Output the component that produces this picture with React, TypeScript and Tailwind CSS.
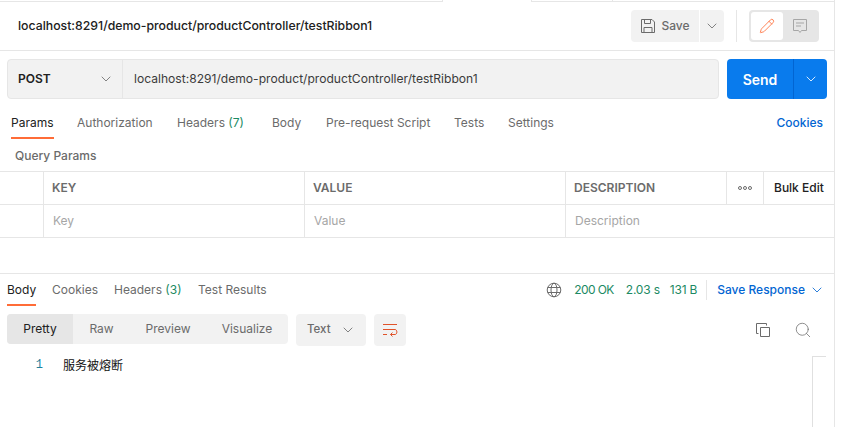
import React from 'react';
import { ChevronDown, Pencil, Search } from 'lucide-react';

const font = "font-['Inter','Liberation_Sans',sans-serif]";

const WrapIcon = () => (
  <svg width="16" height="16" viewBox="0 0 16 16" fill="none" stroke="#e0532a" strokeWidth="1">
    <path d="M1 2.5h14M1 7.5h12c2.5 0 2.5 5 0 5H8.5M10.5 10.5l-2 2 2 2M1 12.5h4" />
  </svg>
);

const SaveIcon = () => (
  <svg width="16" height="16" viewBox="0 0 16 16" fill="none" stroke="currentColor" strokeWidth="1">
    <path d="M1.5 1.5h10.5l2.5 2.5v10.5h-13zM4.5 1.5v4h6v-4M4 14.5v-5h8v5" />
  </svg>
);

const CommentIcon = () => (
  <svg width="16" height="16" viewBox="0 0 16 16" fill="none" stroke="currentColor" strokeWidth="1">
    <path d="M1.5 1.5h13v11h-5l-1.5 2-1.5-2h-5zM4 5h8M4 8h5" />
  </svg>
);

const CopyIcon = () => (
  <svg width="16" height="16" viewBox="0 0 16 16" fill="none" stroke="currentColor" strokeWidth="1">
    <path d="M5.5 5.5h9v9h-9zM3.5 11.5h-2v-10h10v2" />
  </svg>
);

const requestTabs = [
  { label: 'Params', width: 'w-[66px]', active: true },
  { label: 'Authorization', width: 'w-[100px]' },
  { label: 'Headers', count: '(7)', width: 'w-[95px]' },
  { label: 'Body', width: 'w-[54px]' },
  { label: 'Pre-request Script', width: 'w-[128px]' },
  { label: 'Tests', width: 'w-[54px]' },
  { label: 'Settings', width: 'w-[70px]' },
];

const responseTabs = [
  { label: 'Body', width: 'w-[45px]', active: true },
  { label: 'Cookies', width: 'w-[62px]' },
  { label: 'Headers', count: '(3)', width: 'w-[84px]' },
  { label: 'Test Results', width: 'w-[80px]' },
];

const Tab = ({ label, count, width, active }: { label: string; count?: string; width: string; active?: boolean }) => (
  <div className={`${width} shrink-0`}>
    <span className={`relative inline-block h-[32px] leading-[32px] whitespace-nowrap ${active ? 'text-[#212121]' : 'text-[#6b6b6b]'}`}>
      {label}
      {count && <span className="text-[#1c8a63]"> {count}</span>}
      {active && <span className="absolute left-0 right-0 bottom-0 h-[2px] bg-[#ff6c37]" />}
    </span>
  </div>
);

export default function App() {
  return (
    <div className={`${font} w-[842px] h-[427px] bg-white overflow-hidden text-[12px] text-[#212121] antialiased`}>
      <div className="w-[835px] h-full border-r border-[#e6e6e6] flex flex-col">
        {/* strip left of the open request tab */}
        <div className="h-[2px] shrink-0 flex">
          <div className="w-[443px] border-b border-r border-[#e6e6e6]" />
          <div className="w-[88px]" />
          <div className="w-[82px] border-b border-r border-l border-[#e6e6e6]" />
          <div className="flex-1 border-b border-[#e6e6e6]" />
        </div>

        {/* Header */}
        <div className="h-[49px] shrink-0 border-b border-[#e6e6e6] flex items-center pl-[18px] pr-[15px]">
          <span className="font-medium text-[12.28px] text-[#212121] flex-1">localhost:8291/demo-product/productController/testRibbon1</span>
          <div className="h-[32px] w-[68px] bg-[#f2f2f2] rounded-l-[4px] flex items-center justify-center gap-[5px] text-[#6b6b6b] font-medium">
            <SaveIcon />
            <span>Save</span>
          </div>
          <div className="ml-px h-[32px] w-[24px] bg-[#f2f2f2] rounded-r-[4px] flex items-center justify-center text-[#6b6b6b]">
            <ChevronDown size={16} strokeWidth={1.25} />
          </div>
          <div className="w-px h-[32px] bg-[#e6e6e6] ml-[12px] mr-[12px]" />
          <div className="w-[70px] h-[32px] bg-[#e6e6e6] rounded-[4px] flex items-center p-[2px]">
            <div className="w-[32px] h-[28px] bg-white rounded-[3px] flex items-center justify-center">
              <Pencil size={16} strokeWidth={1.25} className="text-[#ff6c37]" />
            </div>
            <div className="flex-1 flex items-center justify-center text-[#a6a6a6]">
              <CommentIcon />
            </div>
          </div>
        </div>

        {/* URL row */}
        <div className="flex h-[40px] mt-[8px] pl-[7px] pr-[7px] shrink-0">
          <div className="w-[712px] flex border border-[#e6e6e6] rounded-[4px] bg-[#f2f2f2]">
            <div className="w-[115px] shrink-0 flex items-center justify-between pl-[10px] pr-[8px] border-r border-[#e6e6e6] font-semibold text-[#212121]">
              <span>POST</span>
              <ChevronDown size={16} strokeWidth={1.25} className="text-[#6b6b6b]" />
            </div>
            <div className="flex-1 flex items-center pl-[11px] text-[12.1px] text-[#3b3b3b]">localhost:8291/demo-product/productController/testRibbon1</div>
          </div>
          <div className="ml-[8px] w-[100px] flex rounded-[4px] bg-[#097bed] text-white">
            <div className="w-[67px] flex items-center justify-center text-[14px] font-semibold border-r border-[#0265d2]">Send</div>
            <div className="flex-1 flex items-center justify-center">
              <ChevronDown size={16} strokeWidth={1.25} />
            </div>
          </div>
        </div>

        {/* Request tabs */}
        <div className="flex items-start pl-[11px] pr-[11px] mt-[8px] h-[32px] shrink-0">
          {requestTabs.map(t => <Tab key={t.label} {...t} />)}
          <span className="ml-auto leading-[32px] text-[#0265d2] font-medium">Cookies</span>
        </div>

        <div className="pl-[15px] mt-[9px] h-[23px] shrink-0 leading-[16px] font-medium text-[#6b6b6b]">Query Params</div>

        {/* Params table */}
        <div className="shrink-0 border-t border-[#e6e6e6]">
          <div className="flex h-[33px] border-b border-[#e6e6e6] font-semibold text-[#6b6b6b]">
            <div className="w-[44px] border-r border-[#e6e6e6]" />
            <div className="w-[261px] border-r border-[#e6e6e6] pl-[8px] flex items-center">KEY</div>
            <div className="w-[261px] border-r border-[#e6e6e6] pl-[8px] flex items-center">VALUE</div>
            <div className="w-[161px] border-r border-[#e6e6e6] pl-[8px] flex items-center">DESCRIPTION</div>
            <div className="w-[37px] border-r border-[#e6e6e6] flex items-center justify-center gap-[1px]">
              <span className="w-[4px] h-[4px] rounded-full border border-[#6b6b6b]" />
              <span className="w-[4px] h-[4px] rounded-full border border-[#6b6b6b]" />
              <span className="w-[4px] h-[4px] rounded-full border border-[#6b6b6b]" />
            </div>
            <div className="flex-1 flex items-center pl-[10px] font-medium text-[#212121]">Bulk Edit</div>
          </div>
          <div className="flex h-[33px] border-b border-[#e6e6e6] text-[#a6a6a6]">
            <div className="w-[44px] border-r border-[#e6e6e6]" />
            <div className="w-[261px] border-r border-[#e6e6e6] pl-[9px] flex items-center">Key</div>
            <div className="w-[261px] border-r border-[#e6e6e6] pl-[9px] flex items-center">Value</div>
            <div className="flex-1 pl-[9px] flex items-center">Description</div>
          </div>
        </div>

        {/* Response */}
        <div className="mt-[35px] shrink-0 border-t border-[#e6e6e6] flex items-start pl-[7px] pr-[9px] h-[33px]">
          {responseTabs.map(t => <Tab key={t.label} {...t} />)}
          <div className="ml-auto flex items-center h-[32px] text-[#1c8a63] tracking-[-0.2px]">
            <svg width="16" height="16" viewBox="0 0 16 16" fill="none" stroke="#6b6b6b" strokeWidth="1" className="mr-[12px]">
              <circle cx="8" cy="8" r="6.8" />
              <ellipse cx="8" cy="8" rx="3" ry="6.8" />
              <path d="M1.6 5.5h12.8M1.6 10.5h12.8" />
            </svg>
            <span className="mr-[12px] tracking-[-0.6px]">200 OK</span>
            <span className="mr-[10px]">2.03 s</span>
            <span>131 B</span>
            <div className="w-px h-[20px] bg-[#e6e6e6] ml-[9px] mr-[10px]" />
            <span className="text-[#0265d2] font-medium tracking-normal mr-[4px]">Save Response</span>
            <ChevronDown size={16} strokeWidth={1.25} className="text-[#0265d2]" />
          </div>
        </div>

        <div className="flex items-start pl-[7px] pr-[14px] mt-[8px] shrink-0">
          <div className="w-[281px] h-[30px] bg-[#f2f2f2] rounded-[4px] flex items-center overflow-hidden text-[#6b6b6b]">
            <div className="w-[66px] h-full bg-[#e6e6e6] flex items-center justify-center text-[#212121]">Pretty</div>
            <div className="w-[57px] text-center">Raw</div>
            <div className="w-[76px] text-center">Preview</div>
            <div className="w-[82px] text-center">Visualize</div>
          </div>
          <div className="ml-[8px] w-[70px] h-[32px] bg-[#f2f2f2] rounded-[4px] flex items-center justify-between pl-[11px] pr-[10px] font-medium text-[11.5px] text-[#6b6b6b]">
            <span>Text</span>
            <ChevronDown size={16} strokeWidth={1.25} />
          </div>
          <div className="ml-[8px] w-[32px] h-[32px] bg-[#f2f2f2] rounded-[4px] flex items-center justify-center">
            <WrapIcon />
          </div>
          <div className="ml-auto flex items-center h-[32px] gap-[23px] pr-[8px] text-[#6b6b6b]">
            <CopyIcon />
            <Search size={18} strokeWidth={1} />
          </div>
        </div>

        {/* Response body */}
        <div className="relative flex-1 flex items-start mt-[11px]">
          <span className="w-[43px] text-right text-[#1f7f9c] font-['Liberation_Mono',monospace] leading-[16px]">1</span>
          <span className="ml-[20px] text-[#111111] leading-[16px] font-['Noto_Sans_CJK_SC','Inter',sans-serif]">服务被熔断</span>
          <div className="absolute right-[8px] top-[-1px] bottom-0 w-[14px] border-l border-t border-[#e0e0e0]" />
        </div>
      </div>
    </div>
  );
}
